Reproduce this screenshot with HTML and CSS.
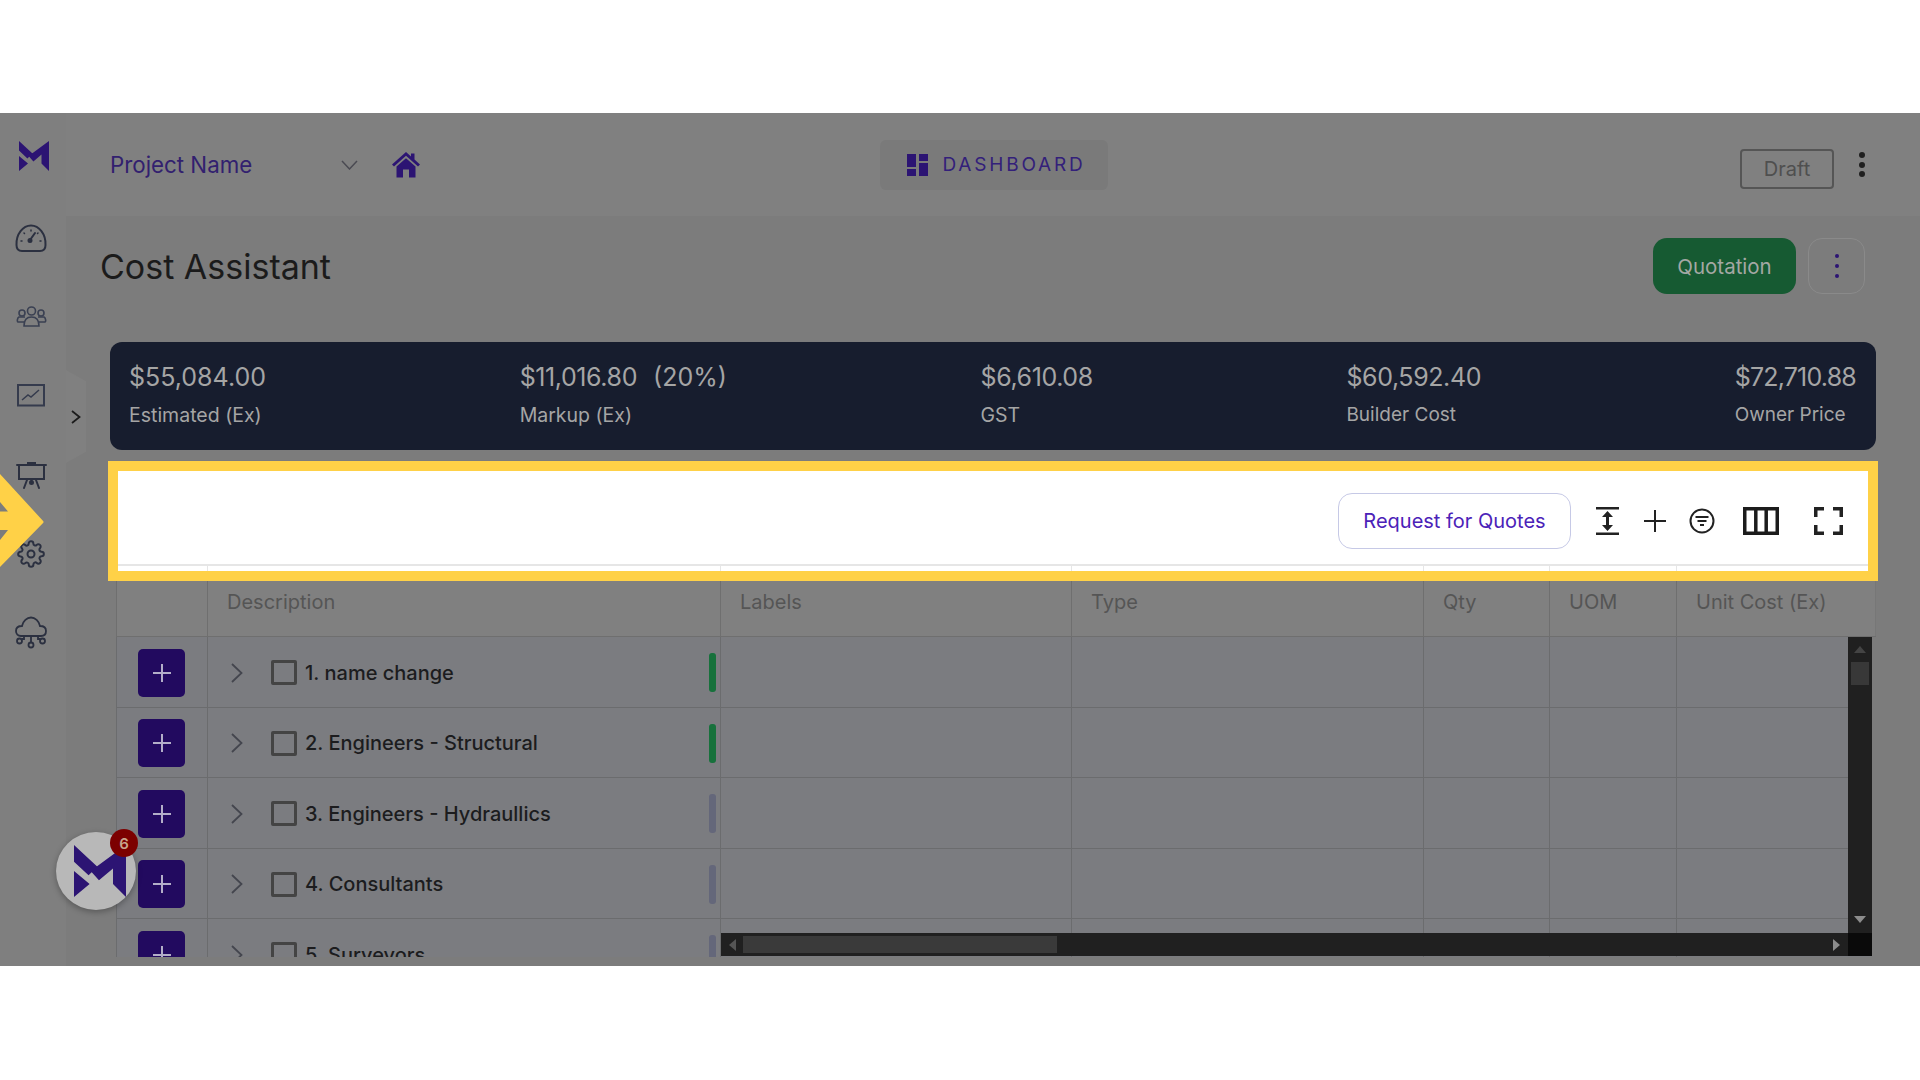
FILE: index.html
```html
<!DOCTYPE html>
<html lang="en">
  <head>
    <title>Cost Assistant</title>
    <meta charset="utf-8" />
    <link rel="stylesheet" href="styles.css">
  </head>

  <body>
    <div class="app">
      <aside class="side">
        <svg class="side__logo" viewBox="0 0 100 100"><path fill="#2c1473" d="M0 0 45 42 28 58 0 32ZM0 50 30 75 0 100ZM100 0V100L75 75V45L48 68 32 50Z"/></svg>
        <div class="side__item">
          <svg width="32" height="28" viewBox="0 0 32 28" fill="none" stroke="#2b3040" stroke-width="2" stroke-linecap="round" stroke-linejoin="round"><path d="M7 27C4 27 1.500 25 1.500 21 1 10 8 1.500 16 1.500S31 10 30.500 21C30.500 25 28 27 25 27Z"/><path d="M15 16 20 9"/><circle cx="15" cy="16.500" r="1.500" fill="#2b3040"/><path d="M6 17H7M25 17H26M9 9 9.500 9.500M16 6V7M23 9 22.500 9.500" stroke-width="1.500"/></svg>
        </div>
        <div class="side__item">
          <svg width="31" height="21" viewBox="0 0 31 21" fill="none" stroke="#3a4052" stroke-width="1.600"><circle cx="15.500" cy="5" r="4"/><circle cx="6" cy="7" r="3"/><circle cx="25" cy="7" r="3"/><path d="M8 20C8 14 11 11 15.500 11S23 14 23 20Z"/><path d="M8 16H2C1 16 1 12 3 11H9M23 16H29C30 16 30 12 28 11H22"/></svg>
        </div>
        <div class="side__item">
          <svg width="28" height="23" viewBox="0 0 28 23" fill="none" stroke="#353b4d" stroke-width="2"><rect x="1" y="1" width="26" height="20.500"/><path d="M5 16 11 11 14 13 22 6" stroke-width="1.500"/></svg>
        </div>
        <div class="side__item">
          <svg width="31" height="28" viewBox="0 0 31 28" fill="none" stroke="#2b3040" stroke-width="2" stroke-linecap="round"><path d="M1 4H30M3 4V18H28V4M12 4V2H19V4M11 19 8 27M20 19 23 27M15.500 18V21"/><circle cx="15.500" cy="21.500" r="1.500" fill="#2b3040"/></svg>
        </div>
        <div class="side__item">
          <svg width="28" height="28" viewBox="0 0 24 24" fill="none" stroke="#2b3040" stroke-width="1.700"><circle cx="12" cy="12" r="3"/><path d="M19.400 15a1.650 1.650 0 0 0 .33 1.820l.06.06a2 2 0 0 1 0 2.830 2 2 0 0 1-2.830 0l-.06-.06a1.650 1.650 0 0 0-1.820-.33 1.650 1.650 0 0 0-1 1.510V21a2 2 0 0 1-2 2 2 2 0 0 1-2-2v-.09A1.650 1.650 0 0 0 9 19.400a1.650 1.650 0 0 0-1.820.33l-.06.06a2 2 0 0 1-2.830 0 2 2 0 0 1 0-2.830l.06-.06a1.650 1.650 0 0 0 .33-1.820 1.650 1.650 0 0 0-1.510-1H3a2 2 0 0 1-2-2 2 2 0 0 1 2-2h.09A1.650 1.650 0 0 0 4.600 9a1.650 1.650 0 0 0-.33-1.820l-.06-.06a2 2 0 0 1 0-2.830 2 2 0 0 1 2.830 0l.06.06a1.650 1.650 0 0 0 1.820.33H9a1.650 1.650 0 0 0 1-1.510V3a2 2 0 0 1 2-2 2 2 0 0 1 2 2v.09a1.650 1.650 0 0 0 1 1.510 1.650 1.650 0 0 0 1.820-.33l.06-.06a2 2 0 0 1 2.830 0 2 2 0 0 1 0 2.830l-.06.06a1.650 1.650 0 0 0-.33 1.820V9a1.650 1.650 0 0 0 1.510 1H21a2 2 0 0 1 2 2 2 2 0 0 1-2 2h-.09a1.650 1.650 0 0 0-1.510 1z"/></svg>
        </div>
        <div class="side__item">
          <svg width="32" height="33" viewBox="0 0 32 33" fill="none" stroke="#2b3040" stroke-width="1.800"><path d="M8 20H6C3 20 1 18 1 15S3 10 7 10C8 5 12 1.500 16 1.500S24 5 25 10C29 10 31 12 31 15S29 20 26 20H8Z"/><path d="M16 20V27M9 20V23H7M23 20V23H25"/><circle cx="16" cy="29" r="2.500"/><circle cx="4.500" cy="25" r="2.500"/><circle cx="27.500" cy="25" r="2.500"/></svg>
        </div>
      </aside>
      <div class="side-tab">
        <svg width="10" height="14" viewBox="0 0 10 14" fill="none" stroke="#1c1c1c" stroke-width="1.800"><path d="M1 1 8.500 7 1 13"/></svg>
      </div>

      <main class="main">
        <header class="topbar">
          <div class="topbar__project">
            <span class="topbar__name">Project Name</span>
            <svg class="topbar__caret" width="17" height="10" viewBox="0 0 17 10" fill="none" stroke="#4a4a52" stroke-width="1.500"><path d="M1 1 8.500 9 16 1"/></svg>
            <svg class="topbar__home" width="28" height="26" viewBox="0 0 28 26" fill="#2c1473"><path d="M14 0 0 12.500 2 14.500 14 3.800 26 14.500 28 12.500 22.500 7.500V1.500H19V4.500ZM14 6.200 4.500 14.500V25.500H11V17.500H17V25.500H23.500V14.500Z"/></svg>
          </div>
          <div class="topbar__dash">
            <svg width="21" height="22" viewBox="0 0 21 22" fill="#2c1473"><path d="M0 0H9V13H0ZM12 0H21V7H12ZM0 15H9V22H0ZM12 9H21V22H12Z"/></svg>
            <span>DASHBOARD</span>
          </div>
          <div class="topbar__right">
            <div class="topbar__draft">Draft</div>
            <div class="topbar__dots"><i></i><i></i><i></i></div>
          </div>
        </header>

        <div class="pagehead">
          <h1 class="pagehead__title">Cost Assistant</h1>
          <div class="pagehead__btn">Quotation</div>
          <div class="pagehead__more"><i></i><i></i><i></i></div>
        </div>

        <section class="summary">
          <div class="summary__item"><div class="summary__val">$55,084.00</div><div class="summary__lbl">Estimated (Ex)</div></div>
          <div class="summary__item"><div class="summary__val summary__val--pair"><span class="summary__tight">$11,016.80</span><span>(20%)</span></div><div class="summary__lbl">Markup (Ex)</div></div>
          <div class="summary__item"><div class="summary__val summary__tight">$6,610.08</div><div class="summary__lbl">GST</div></div>
          <div class="summary__item"><div class="summary__val summary__tight">$60,592.40</div><div class="summary__lbl summary__lbl--small">Builder Cost</div></div>
          <div class="summary__item"><div class="summary__val summary__tighter">$72,710.88</div><div class="summary__lbl summary__lbl--small">Owner Price</div></div>
        </section>

        <div class="toolbar">
          <div class="toolbar__rfq">Request for Quotes</div>
          <svg class="toolbar__height" width="23" height="28" viewBox="0 0 23 28" fill="#222"><path d="M0 0H23V2.500H0ZM0 25.500H23V28H0ZM11.500 4 17 10H13V18H17L11.500 24 6 18H10V10H6Z"/></svg>
          <svg class="toolbar__plus" width="22" height="22" viewBox="0 0 22 22" stroke="#222" stroke-width="2"><path d="M11 0V22M0 11H22"/></svg>
          <svg class="toolbar__filter" width="26" height="26" viewBox="0 0 26 26" fill="none" stroke="#222" stroke-width="2"><circle cx="13" cy="13" r="11.500"/><path d="M6.500 9H19.500M8.500 13H17.500M11 17H15"/></svg>
          <svg class="toolbar__cols" width="36" height="28" viewBox="0 0 36 28" fill="none" stroke="#1c1c1c" stroke-width="3.500"><rect x="1.750" y="1.750" width="32.500" height="24.500"/><path d="M12.800 2V26M23.200 2V26"/></svg>
          <svg class="toolbar__full" width="29" height="28" viewBox="0 0 29 28" fill="none" stroke="#222" stroke-width="3.500"><path d="M1.750 10V1.750H10M19 1.750H27.250V10M27.250 18V26.250H19M10 26.250H1.750V18"/></svg>
        </div>

        <div class="grid">
          <div class="grid__head">
            <div class="grid__th"></div>
            <div class="grid__th">Description</div>
            <div class="grid__th">Labels</div>
            <div class="grid__th">Type</div>
            <div class="grid__th">Qty</div>
            <div class="grid__th">UOM</div>
            <div class="grid__th">Unit Cost (Ex)</div>
          </div>
          <div class="grid__body">
            <div class="grid__row">
              <div class="grid__td grid__td--add"><div class="add-btn"><svg width="18" height="18" viewBox="0 0 18 18" stroke="#b3aec8" stroke-width="2"><path d="M9 0V18M0 9H18"/></svg></div></div>
              <div class="grid__td grid__td--desc"><svg class="row-caret" width="12" height="20" viewBox="0 0 12 20" fill="none" stroke="#44464e" stroke-width="1.800"><path d="M1 1 10.500 10 1 19"/></svg><span class="row-check"></span><span class="row-name">1. name change</span><span class="row-bar row-bar--ok"></span></div>
              <div class="grid__td"></div><div class="grid__td"></div><div class="grid__td"></div><div class="grid__td"></div><div class="grid__td"></div>
            </div>
            <div class="grid__row">
              <div class="grid__td grid__td--add"><div class="add-btn"><svg width="18" height="18" viewBox="0 0 18 18" stroke="#b3aec8" stroke-width="2"><path d="M9 0V18M0 9H18"/></svg></div></div>
              <div class="grid__td grid__td--desc"><svg class="row-caret" width="12" height="20" viewBox="0 0 12 20" fill="none" stroke="#44464e" stroke-width="1.800"><path d="M1 1 10.500 10 1 19"/></svg><span class="row-check"></span><span class="row-name">2. Engineers - Structural</span><span class="row-bar row-bar--ok"></span></div>
              <div class="grid__td"></div><div class="grid__td"></div><div class="grid__td"></div><div class="grid__td"></div><div class="grid__td"></div>
            </div>
            <div class="grid__row">
              <div class="grid__td grid__td--add"><div class="add-btn"><svg width="18" height="18" viewBox="0 0 18 18" stroke="#b3aec8" stroke-width="2"><path d="M9 0V18M0 9H18"/></svg></div></div>
              <div class="grid__td grid__td--desc"><svg class="row-caret" width="12" height="20" viewBox="0 0 12 20" fill="none" stroke="#44464e" stroke-width="1.800"><path d="M1 1 10.500 10 1 19"/></svg><span class="row-check"></span><span class="row-name">3. Engineers - Hydraullics</span><span class="row-bar"></span></div>
              <div class="grid__td"></div><div class="grid__td"></div><div class="grid__td"></div><div class="grid__td"></div><div class="grid__td"></div>
            </div>
            <div class="grid__row">
              <div class="grid__td grid__td--add"><div class="add-btn"><svg width="18" height="18" viewBox="0 0 18 18" stroke="#b3aec8" stroke-width="2"><path d="M9 0V18M0 9H18"/></svg></div></div>
              <div class="grid__td grid__td--desc"><svg class="row-caret" width="12" height="20" viewBox="0 0 12 20" fill="none" stroke="#44464e" stroke-width="1.800"><path d="M1 1 10.500 10 1 19"/></svg><span class="row-check"></span><span class="row-name">4. Consultants</span><span class="row-bar"></span></div>
              <div class="grid__td"></div><div class="grid__td"></div><div class="grid__td"></div><div class="grid__td"></div><div class="grid__td"></div>
            </div>
            <div class="grid__row">
              <div class="grid__td grid__td--add"><div class="add-btn"><svg width="18" height="18" viewBox="0 0 18 18" stroke="#b3aec8" stroke-width="2"><path d="M9 0V18M0 9H18"/></svg></div></div>
              <div class="grid__td grid__td--desc"><svg class="row-caret" width="12" height="20" viewBox="0 0 12 20" fill="none" stroke="#44464e" stroke-width="1.800"><path d="M1 1 10.500 10 1 19"/></svg><span class="row-check"></span><span class="row-name">5. Surveyors</span><span class="row-bar"></span></div>
              <div class="grid__td"></div><div class="grid__td"></div><div class="grid__td"></div><div class="grid__td"></div><div class="grid__td"></div>
            </div>

            <div class="vscroll">
              <svg class="vscroll__up" width="12" height="7" viewBox="0 0 12 7" fill="#444"><path d="M6 0 12 7H0Z"/></svg>
              <div class="vscroll__thumb"></div>
              <svg class="vscroll__down" width="12" height="7" viewBox="0 0 12 7" fill="#8c8c8c"><path d="M0 0H12L6 7Z"/></svg>
            </div>
            <div class="hscroll">
              <svg class="hscroll__left" width="7" height="12" viewBox="0 0 7 12" fill="#555"><path d="M7 0V12L0 6Z"/></svg>
              <div class="hscroll__thumb"></div>
              <svg class="hscroll__right" width="7" height="12" viewBox="0 0 7 12" fill="#8c8c8c"><path d="M0 0 7 6 0 12Z"/></svg>
              <div class="hscroll__corner"></div>
            </div>
          </div>
        </div>
      </main>

      <!-- tutorial overlay bits -->
      <div class="spot"></div>
      <svg class="spot-arrow" width="44" height="96" viewBox="0 0 44 96"><path fill="#ffd147" stroke="#ffd147" stroke-width="3" stroke-linejoin="round" d="M-3 0 42 49 -3 95Z"/><path fill="#7c7c7c" d="M0 29 8 38.500H0ZM0 57H8L0 67Z"/></svg>

      <div class="chat">
        <svg width="52" height="52" viewBox="0 0 100 100"><path fill="#2c1473" d="M0 0 45 42 28 58 0 32ZM0 50 30 75 0 100ZM100 0V100L75 75V45L48 68 32 50Z"/></svg>
        <span class="chat__badge">6</span>
      </div>
    </div>
  </body>
</html>
```

FILE: styles.css
```css
* {
  box-sizing: border-box;
}

body {
  margin: 0;
  height: 1080px;
  overflow: hidden;
  background: #fff;
  font-family: Inter, sans-serif;
}

.app {
  position: relative;
  display: flex;
  height: 853px;
  margin-top: 113px;
  overflow: hidden;
  background: #7c7c7c;
}

/* sidebar */
.side {
  flex: none;
  width: 66px;
  padding: 28px 4px 0 0;
  display: flex;
  flex-direction: column;
  align-items: center;
  background: #7f7f7f;
}

.side__logo {
  width: 30px;
  height: 30px;
  margin: 0 0 27px 6px;
}

.side__item {
  flex: none;
  height: 79px;
  display: flex;
  align-items: center;
  justify-content: center;
}

.side-tab {
  position: absolute;
  left: 66px;
  top: 257px;
  width: 20px;
  height: 93px;
  display: flex;
  align-items: center;
  justify-content: center;
  background: #808080;
  clip-path: polygon(0 0, 100% 12%, 100% 88%, 0 100%);
}

/* top bar */
.main {
  flex: 1;
  min-width: 0;
}

.topbar {
  height: 103px;
  padding: 0 55px 0 44px;
  display: grid;
  grid-template-columns: 1fr auto 1fr;
  align-items: center;
  background: #808080;
}

.topbar__project {
  display: flex;
  align-items: center;
}

.topbar__name {
  width: 231px;
  font-size: 22.300px;
  color: #32206f;
}

.topbar__home {
  margin-left: 34px;
}

.topbar__dash {
  width: 228px;
  height: 50px;
  margin-left: 12px;
  padding-left: 27px;
  display: flex;
  align-items: center;
  gap: 15px;
  border-radius: 6px;
  background: #7a7a7a;
  font-size: 19px;
  letter-spacing: 2.800px;
  color: #33207a;
}

.topbar__right {
  display: flex;
  align-items: center;
  justify-content: flex-end;
  gap: 24px;
}

.topbar__draft {
  width: 94px;
  height: 40px;
  margin: 9px 1px 0 0;
  display: flex;
  align-items: center;
  justify-content: center;
  border: 2px solid #555;
  border-radius: 4px;
  font-size: 20px;
  color: #4f4f4f;
}

.topbar__dots i {
  display: block;
  width: 6px;
  height: 6px;
  margin: 3.500px 0;
  border-radius: 50%;
  background: #1f1f1f;
}

/* page title */
.pagehead {
  height: 126px;
  padding: 22px 55px 48px 34px;
  display: flex;
  align-items: center;
}

.pagehead__title {
  flex: 1;
  margin: 0;
  font-size: 34px;
  font-weight: 400;
  color: #1b1b1b;
}

.pagehead__btn {
  width: 143px;
  height: 56px;
  display: flex;
  align-items: center;
  justify-content: center;
  border-radius: 14px;
  background: #165a32;
  font-size: 20.500px;
  color: #a4a8a4;
}

.pagehead__more {
  width: 57px;
  height: 56px;
  margin-left: 12px;
  display: flex;
  flex-direction: column;
  align-items: center;
  justify-content: center;
  gap: 6px;
  border: 1px solid #8a8a8a;
  border-radius: 14px;
}

.pagehead__more i {
  width: 4px;
  height: 4px;
  border-radius: 50%;
  background: #2c1473;
}

/* money strip */
.summary {
  height: 108px;
  margin: 0 44px;
  padding: 18px 20px 0 19px;
  display: flex;
  justify-content: space-between;
  border-radius: 12px;
  background: #171d2e;
  color: #a5a5a5;
}

.summary__val {
  font-size: 25px;
  line-height: 34px;
}

.summary__val--pair {
  display: flex;
  gap: 16px;
}

.summary__tight {
  letter-spacing: -.4px;
}

.summary__tighter {
  letter-spacing: -.800px;
}

.summary__lbl {
  margin-top: 9px;
  font-size: 19.500px;
  line-height: 24px;
}

.summary__lbl--small {
  font-size: 19px;
}

/* toolbar under the strip */
.toolbar {
  height: 101px;
  margin: 15px 44px 0 50px;
  padding: 13px 33px 0 0;
  display: flex;
  align-items: center;
  justify-content: flex-end;
  background: #fff;
  border-bottom: 2px solid #e6e6e6;
}

.toolbar__rfq {
  width: 233px;
  height: 56px;
  display: flex;
  align-items: center;
  justify-content: center;
  border: 1.500px solid #c6c9e6;
  border-radius: 14px;
  font-size: 20px;
  color: #4b22b8;
}

.toolbar__height { margin-left: 25px; }
.toolbar__plus { margin-left: 25px; }
.toolbar__filter { margin-left: 23px; }
.toolbar__cols { margin-left: 28px; }
.toolbar__full { margin-left: 35px; }

/* table */
.grid {
  margin: 0 44px 0 50px;
}

.grid__head,
.grid__row {
  display: grid;
  grid-template-columns: 92px 513px 351px 352px 126px 127px 199px;
}

.grid__head {
  height: 71px;
  background: linear-gradient(#fff 0 5px, #808080 5px);
  border-bottom: 1px solid #6f6f6f;
}

.grid__th {
  position: relative;
  padding: 20px 0 0 19px;
  font-size: 20px;
  line-height: 32px;
  color: #555;
  border-right: 1px solid #6f6f6f;
}

.grid__th:first-child {
  border-left: 1px solid #6f6f6f;
}

.grid__th:last-child {
  border-right-color: #777;
}

.grid__th::after {
  content: "";
  position: absolute;
  top: 0;
  right: -1px;
  width: 1px;
  height: 5px;
  background: #e6e6e6;
}

.grid__body {
  position: relative;
  width: 1756px;
  height: 320px;
  overflow: hidden;
  background: #7b7c80;
}

.grid__row {
  height: 70.500px;
  border-bottom: 1px solid #6b6c6e;
}

.grid__td {
  border-right: 1px solid #6b6c6e;
}

.grid__td--add {
  padding: 2px 0 0 21px;
  display: flex;
  align-items: center;
  border-left: 1px solid #6b6c6e;
}

.grid__td--desc {
  padding: 2px 4px 0 23px;
  display: flex;
  align-items: center;
}

.add-btn {
  width: 47px;
  height: 48px;
  display: flex;
  align-items: center;
  justify-content: center;
  border-radius: 5px;
  background: #220a5f;
}

.row-check {
  flex: none;
  width: 26px;
  height: 25px;
  margin-left: 28px;
  border: 3px solid #444;
  border-radius: 2px;
}

.row-name {
  flex: 1;
  margin-left: 8px;
  font-size: 20px;
  font-weight: 500;
  color: #1c1c1e;
}

.row-bar {
  width: 7px;
  height: 39px;
  border-radius: 3px;
  background: #64677a;
}

.row-bar--ok {
  background: #17713c;
}

/* scrollbars sit on top of the rows */
.vscroll {
  position: absolute;
  top: 0;
  right: 0;
  bottom: 24px;
  width: 24px;
  display: flex;
  flex-direction: column;
  align-items: center;
  background: #202020;
}

.vscroll__up {
  margin-top: 9px;
}

.vscroll__thumb {
  width: 18px;
  height: 23px;
  margin-top: 9px;
  background: #383838;
}

.vscroll__down {
  margin-top: auto;
  margin-bottom: 10px;
}

.hscroll {
  position: absolute;
  left: 605px;
  right: 0;
  bottom: 1px;
  height: 23px;
  padding-left: 8px;
  display: flex;
  align-items: center;
  background: #202020;
}

.hscroll__thumb {
  width: 314px;
  height: 17px;
  margin-left: 7px;
  background: #3a3a3a;
}

.hscroll__right {
  margin-left: auto;
  margin-right: 32px;
}

.hscroll__corner {
  position: absolute;
  right: 0;
  top: 0;
  bottom: 0;
  width: 24px;
  background: #0a0a0a;
}

/* highlight frame + arrow from the walkthrough */
.spot {
  position: absolute;
  left: 108px;
  top: 348px;
  width: 1770px;
  height: 120px;
  border: 10px solid #ffd147;
}

.spot-arrow {
  position: absolute;
  left: 0;
  top: 360px;
}

/* chat bubble */
.chat {
  position: absolute;
  left: 56px;
  top: 719px;
  width: 80px;
  height: 78px;
  padding: 13px 0 0 18px;
  border-radius: 50%;
  background: #b8b8b8;
  box-shadow: 0 2px 6px rgba(0, 0, 0, .3);
}

.chat__badge {
  position: absolute;
  left: 54px;
  top: -3px;
  width: 28px;
  height: 28px;
  display: flex;
  align-items: center;
  justify-content: center;
  border-radius: 50%;
  background: #7c0000;
  font-size: 15px;
  font-weight: 600;
  color: #c9a58c;
}
```
